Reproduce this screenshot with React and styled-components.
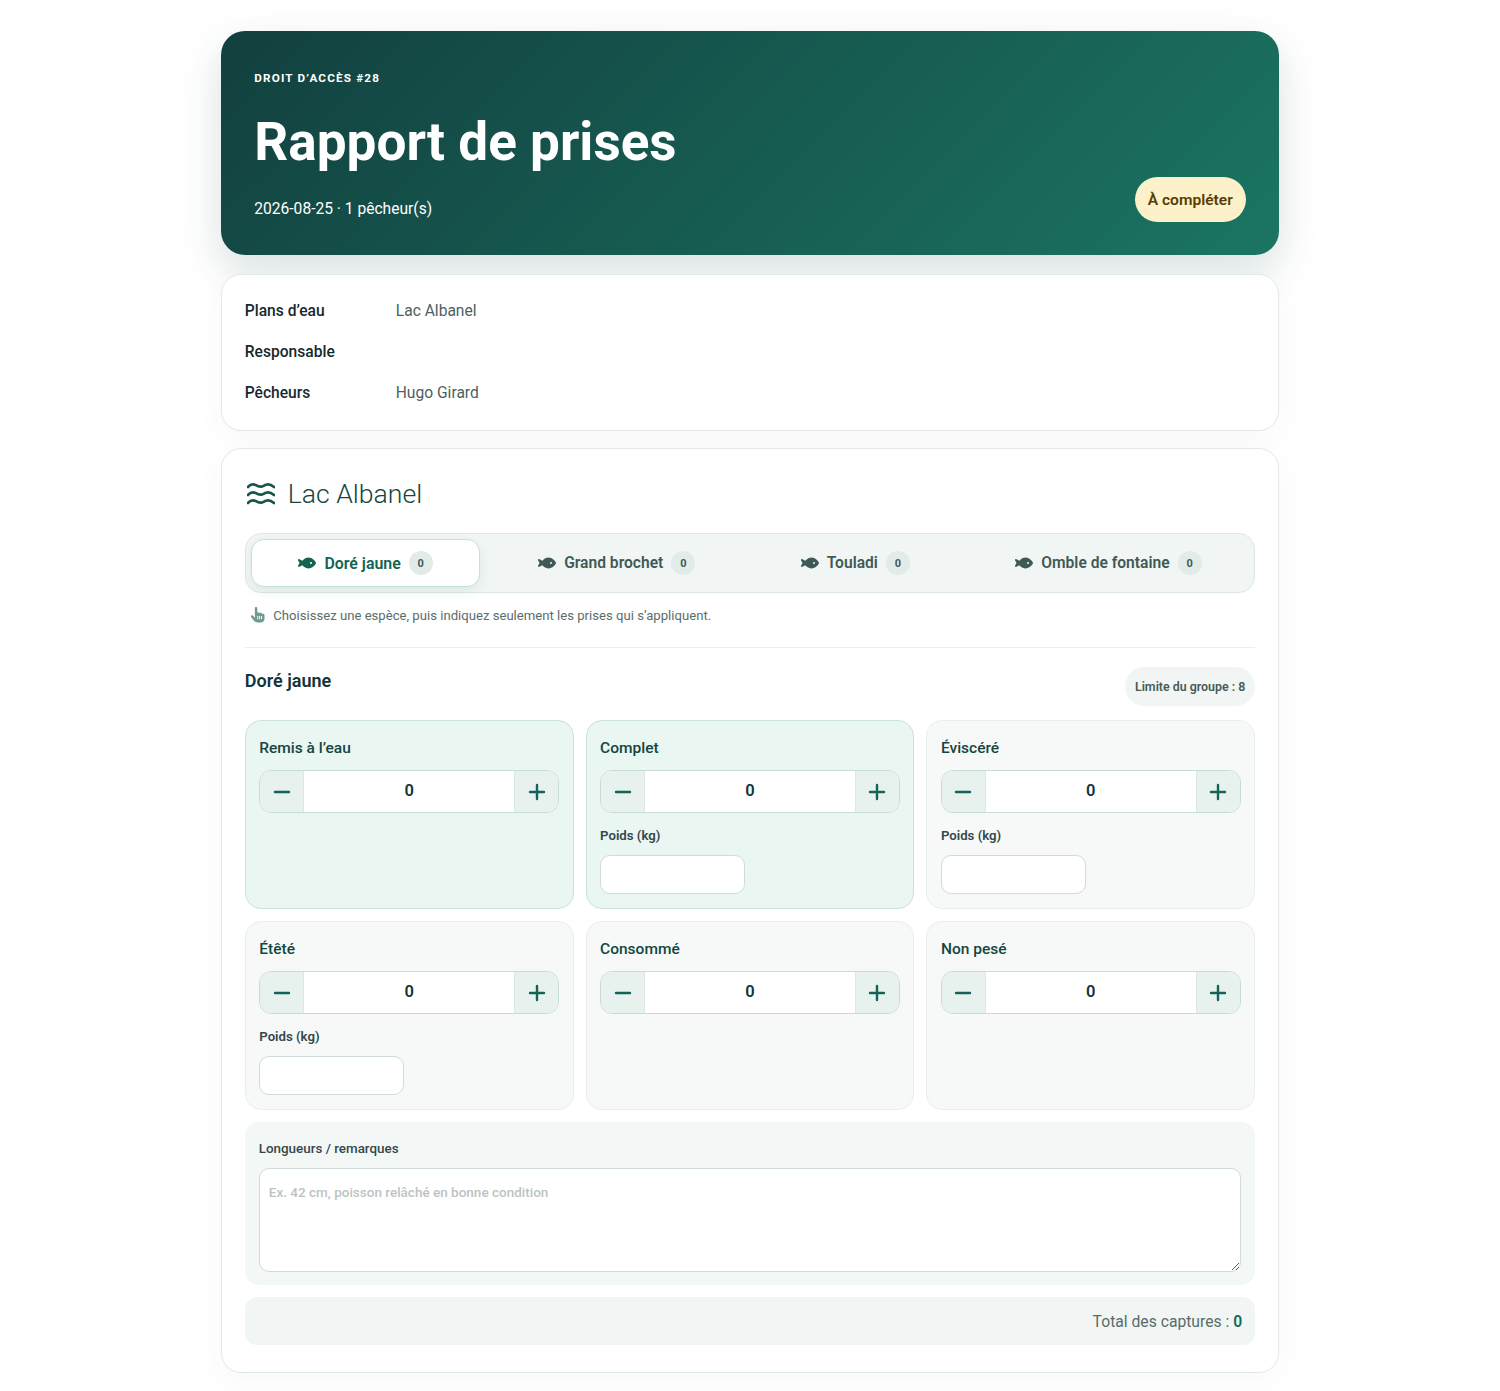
import React from 'react'
import styled, { createGlobalStyle } from 'styled-components'
import { FaFish, FaHandPointer } from 'react-icons/fa6'
import { Minus, Plus } from 'lucide-react'

const GlobalStyle = createGlobalStyle`
  * { box-sizing: border-box; }
  html, body { margin: 0; padding: 0; background: #fff; }
  body { font-family: Roboto, "Liberation Sans", sans-serif; color: #12343b; }
`

const Page = styled.main`
  width: 1058.5px;
  margin: 0 auto;
  padding: 31px 0 18px;
  display: flex;
  flex-direction: column;
`

const Hero = styled.header`
  height: 224px;
  padding: 33px 33.5px 33px;
  border-radius: 24px;
  color: #fff;
  background: linear-gradient(135deg, #12403f 0%, #1b7561 100%);
  box-shadow: 0 16px 40px rgba(18, 64, 63, 0.16);
  display: flex;
  justify-content: space-between;
  align-items: flex-end;
`

const HeroText = styled.div`
  align-self: stretch;
  display: flex;
  flex-direction: column;
`

const Eyebrow = styled.div`
  font-size: 11.7px;
  line-height: 29px;
  font-weight: 700;
  letter-spacing: 1.17px;
  text-transform: uppercase;
`

const Title = styled.h1`
  margin: 18px 0 0;
  font-size: 53.1px;
  line-height: 62px;
  font-weight: 700;
`

const Meta = styled.p`
  margin: 24px 0 0;
  font-size: 15.6px;
  line-height: 24px;
`

const StatusBadge = styled.span`
  height: 45px;
  padding: 0 13px;
  border-radius: 23px;
  background: #fdf1c9;
  color: #5a3c05;
  font-size: 15.56px;
  font-weight: 600;
  display: flex;
  align-items: center;
`

const Card = styled.section`
  background: #fff;
  border: 1px solid #e1e9e7;
  border-radius: 20px;
  box-shadow: 0 8px 30px rgba(18, 64, 63, 0.04);
`

const InfoCard = styled(Card)`
  margin-top: 19px;
  height: 157px;
  padding: 24px 23px;
  display: flex;
  flex-direction: column;
  gap: 17px;
`

const InfoRow = styled.div`
  display: flex;
  height: 24px;
  align-items: center;
  font-size: 15.6px;
`

const InfoLabel = styled.span`
  width: 151px;
  font-weight: 500;
  color: #17282c;
`

const InfoValue = styled.span`
  color: #4d5f5f;
`

const LakeCard = styled(Card)`
  margin-top: 17px;
  padding: 23px 23px 27px;
`

const LakeTitle = styled.h2`
  margin: 0;
  height: 42px;
  padding-left: 2px;
  display: flex;
  align-items: center;
  gap: 13px;
  font-size: 26.6px;
  font-weight: 300;
  color: #14463f;
`

const WaveIcon = styled.svg`
  width: 28px;
  height: 24px;
  fill: none;
  stroke: #14564b;
  stroke-width: 2.7;
  stroke-linecap: round;
`

const Tabs = styled.div`
  margin-top: 19px;
  height: 60px;
  padding: 5px;
  border: 1px solid #dde7e4;
  border-radius: 16px;
  background: #f1f6f4;
  display: flex;
  gap: 10px;
`

const Tab = styled.button`
  flex: 1 1 auto;
  border: 1px solid ${p => (p.$active ? '#c4e0d7' : 'transparent')};
  border-radius: 13px;
  background: ${p => (p.$active ? '#fff' : 'transparent')};
  box-shadow: ${p => (p.$active ? '0 4px 12px rgba(18, 64, 63, 0.08)' : 'none')};
  color: ${p => (p.$active ? '#136453' : '#3f5a56')};
  font-family: inherit;
  font-size: ${p => (p.$active ? '15.9px' : '15.6px')};
  font-weight: 600;
  display: flex;
  align-items: center;
  justify-content: center;
  gap: 8px;
  padding: 0 46.5px;
  svg { font-size: 18px; }
`

const TabCount = styled.span`
  width: 24px;
  height: 24px;
  border-radius: 50%;
  background: #e1ebe8;
  color: #3f5a56;
  font-size: 11px;
  font-weight: 700;
  display: flex;
  align-items: center;
  justify-content: center;
`

const Hint = styled.p`
  margin: 12px 0 0;
  padding-left: 5px;
  height: 20px;
  display: flex;
  align-items: center;
  gap: 8px;
  font-size: 13.13px;
  color: #5a6e6c;
  svg { font-size: 15.5px; color: #6f9a90; }
`

const Divider = styled.hr`
  margin: 22px 0 0;
  border: 0;
  border-top: 1px solid #e8efed;
`

const SpeciesHead = styled.div`
  margin-top: 19px;
  display: flex;
  justify-content: space-between;
  align-items: flex-start;
`

const SpeciesName = styled.h3`
  margin: 0;
  font-size: 18px;
  line-height: 28px;
  font-weight: 600;
  color: #12343b;
`

const Limit = styled.span`
  height: 39px;
  padding: 0 10px;
  border-radius: 20px;
  background: #f1f6f4;
  color: #465a58;
  font-size: 12.4px;
  font-weight: 600;
  display: flex;
  align-items: center;
`

const CatchGrid = styled.div`
  margin-top: 14px;
  display: grid;
  grid-template-columns: repeat(3, 1fr);
  grid-auto-rows: 189px;
  gap: 12px;
`

const CatchCard = styled.div`
  padding: 15px 13.5px 0;
  border: 1px solid ${p => (p.$active ? '#c9e3da' : '#e8efed')};
  border-radius: 16px;
  background: ${p => (p.$active ? '#e9f6f1' : '#f6f9f8')};
`

const CatchName = styled.div`
  font-size: 15.5px;
  line-height: 24px;
  font-weight: 500;
  color: #14463f;
`

const Stepper = styled.div`
  margin-top: 10px;
  height: 43px;
  border: 1px solid #c8dbd5;
  border-radius: 12px;
  overflow: hidden;
  display: flex;
  background: #fff;
`

const StepButton = styled.button`
  width: 44px;
  border: 0;
  padding: 0;
  background: #e7f1ee;
  color: #14635a;
  display: flex;
  align-items: center;
  justify-content: center;
  border-${p => (p.$side === 'left' ? 'right' : 'left')}: 1px solid #dce8e4;
`

const StepValue = styled.input`
  flex: 1;
  min-width: 0;
  border: 0;
  outline: 0;
  padding: 0 0 2px;
  background: #fff;
  text-align: center;
  font-family: inherit;
  font-size: 16.5px;
  font-weight: 600;
  color: #12343b;
`

const WeightLabel = styled.label`
  display: block;
  margin-top: 14px;
  font-size: 13.2px;
  line-height: 18px;
  font-weight: 600;
  color: #33484a;
`

const WeightInput = styled.input`
  display: block;
  margin-top: 10px;
  width: 145px;
  height: 39px;
  border: 1px solid #d0dcd9;
  border-radius: 10px;
  background: #fff;
`

const Notes = styled.div`
  margin-top: 12px;
  height: 163px;
  padding: 18px 14px 0 14px;
  border-radius: 14px;
  background: #f3f7f6;
`

const NotesLabel = styled.label`
  display: block;
  font-size: 13.4px;
  line-height: 18px;
  font-weight: 500;
  color: #33484a;
`

const NotesInput = styled.textarea`
  display: block;
  margin-top: 10px;
  width: 100%;
  height: 104px;
  padding: 15px 9px;
  border: 1px solid #cfdcd9;
  border-radius: 10px;
  font-family: inherit;
  font-size: 13.5px;
  font-weight: 500;
  &::placeholder { color: #bcc4c3; opacity: 1; }
`

const TotalBar = styled.div`
  margin-top: 12px;
  height: 48px;
  padding: 0 13px;
  border-radius: 12px;
  background: #f1f6f4;
  display: flex;
  align-items: center;
  justify-content: flex-end;
  font-size: 15.7px;
  color: #5a6b6a;
  strong { margin-left: 4px; font-weight: 600; color: #0f6b5a; }
`

const species = ['Doré jaune', 'Grand brochet', 'Touladi', 'Omble de fontaine']

const catches = [
  { name: 'Remis à l’eau', active: true },
  { name: 'Complet', active: true, weight: true },
  { name: 'Éviscéré', weight: true },
  { name: 'Étêté', weight: true },
  { name: 'Consommé' },
  { name: 'Non pesé' },
]

const wave = 'C3.5 2 6 1.5 9 3.2 C11 4.6 14 5.5 17 3.6 C20 1.6 23 1.6 27 5'

export default function App() {
  return (
    <>
      <GlobalStyle />
      <Page>
        <Hero>
          <HeroText>
            <Eyebrow>Droit d’accès #28</Eyebrow>
            <Title>Rapport de prises</Title>
            <Meta>2026-08-25 · 1 pêcheur(s)</Meta>
          </HeroText>
          <StatusBadge>À compléter</StatusBadge>
        </Hero>

        <InfoCard>
          <InfoRow><InfoLabel>Plans d’eau</InfoLabel><InfoValue>Lac Albanel</InfoValue></InfoRow>
          <InfoRow><InfoLabel>Responsable</InfoLabel></InfoRow>
          <InfoRow><InfoLabel>Pêcheurs</InfoLabel><InfoValue>Hugo Girard</InfoValue></InfoRow>
        </InfoCard>

        <LakeCard>
          <LakeTitle>
            <WaveIcon viewBox="0 0 28 24">
              <path transform="translate(0 1)" d={`M1 5 ${wave}`} />
              <path transform="translate(0 9)" d={`M1 5 ${wave}`} />
              <path transform="translate(0 17)" d={`M1 5 ${wave}`} />
            </WaveIcon>
            Lac Albanel
          </LakeTitle>

          <Tabs>
            {species.map((name, i) => (
              <Tab key={name} $active={i === 0}>
                <FaFish />
                {name}
                <TabCount>0</TabCount>
              </Tab>
            ))}
          </Tabs>

          <Hint><FaHandPointer />Choisissez une espèce, puis indiquez seulement les prises qui s’appliquent.</Hint>
          <Divider />

          <SpeciesHead>
            <SpeciesName>Doré jaune</SpeciesName>
            <Limit>Limite du groupe : 8</Limit>
          </SpeciesHead>

          <CatchGrid>
            {catches.map(c => (
              <CatchCard key={c.name} $active={c.active}>
                <CatchName>{c.name}</CatchName>
                <Stepper>
                  <StepButton $side="left"><Minus size={24} strokeWidth={2.4} /></StepButton>
                  <StepValue defaultValue="0" />
                  <StepButton $side="right"><Plus size={24} strokeWidth={2.4} /></StepButton>
                </Stepper>
                {c.weight && (
                  <>
                    <WeightLabel>Poids (kg)</WeightLabel>
                    <WeightInput />
                  </>
                )}
              </CatchCard>
            ))}
          </CatchGrid>

          <Notes>
            <NotesLabel>Longueurs / remarques</NotesLabel>
            <NotesInput placeholder="Ex. 42 cm, poisson relâché en bonne condition" />
          </Notes>

          <TotalBar>Total des captures : <strong>0</strong></TotalBar>
        </LakeCard>
      </Page>
    </>
  )
}
